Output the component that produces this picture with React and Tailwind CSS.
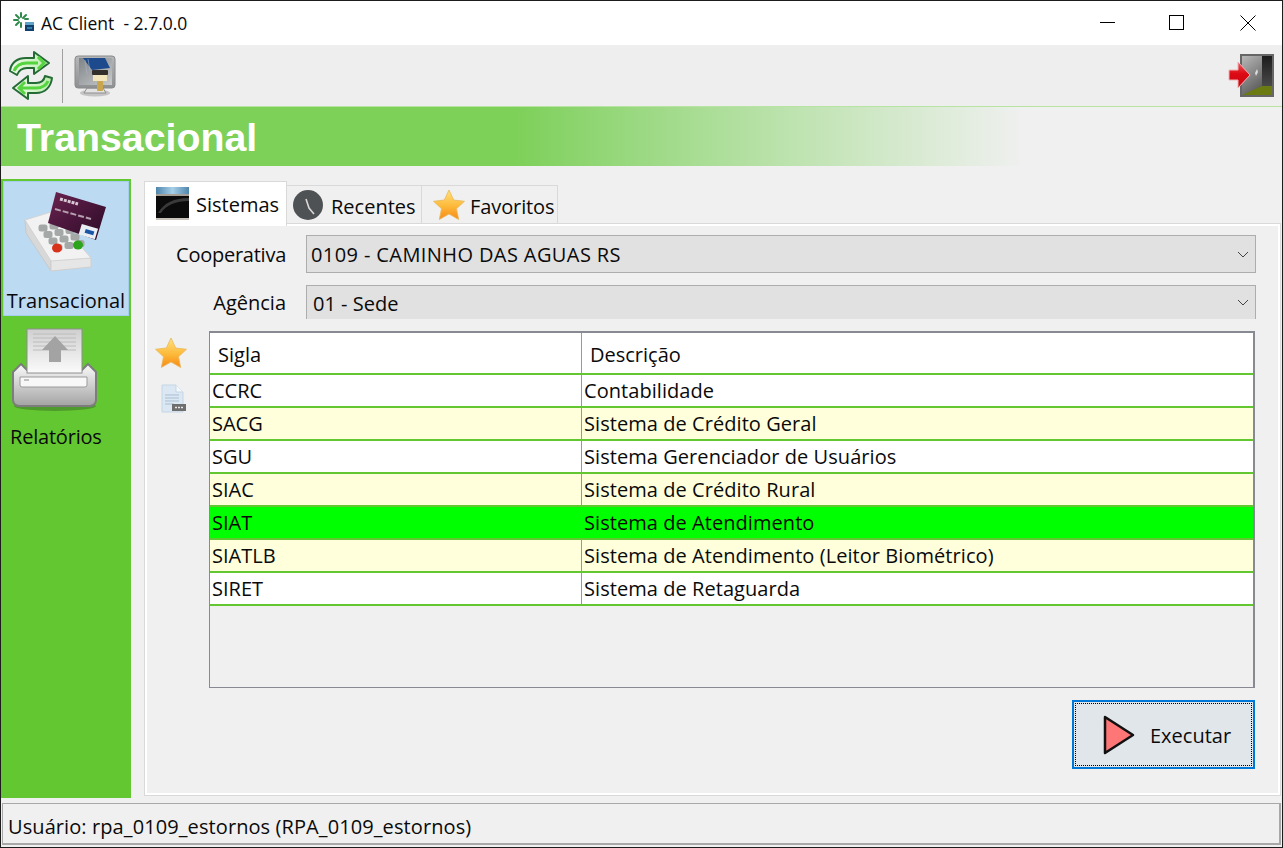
import React from 'react';

const UI_FONT = 'font-["Open_Sans","Noto_Sans",sans-serif]';

const rows = [
    { sigla: 'CCRC', desc: 'Contabilidade', bg: 'bg-white' },
    { sigla: 'SACG', desc: 'Sistema de Crédito Geral', bg: 'bg-[#ffffdc]' },
    { sigla: 'SGU', desc: 'Sistema Gerenciador de Usuários', bg: 'bg-white' },
    { sigla: 'SIAC', desc: 'Sistema de Crédito Rural', bg: 'bg-[#ffffdc]' },
    { sigla: 'SIAT', desc: 'Sistema de Atendimento', bg: 'bg-[#00ff00]' },
    { sigla: 'SIATLB', desc: 'Sistema de Atendimento (Leitor Biométrico)', bg: 'bg-[#ffffdc]' },
    { sigla: 'SIRET', desc: 'Sistema de Retaguarda', bg: 'bg-white' },
];

const AppLogo = () => (
    <svg width="22" height="22" viewBox="0 0 22 22">
        <g stroke="#2f8a4c" strokeWidth="2" strokeLinecap="round">
            <path d="M8 1v4M3 3l3 3M1 8h4M3 13l3-3M8 15v-4M13 3l-3 3M15 7h-3" />
        </g>
        <rect x="12" y="10" width="9" height="9" fill="#123f6b" />
        <rect x="12" y="10" width="9" height="3" fill="#5fa3c7" />
        <rect x="14" y="15" width="5" height="2" fill="#2f7fa8" />
    </svg>
);

const RefreshIcon = () => (
    <svg width="46" height="50" viewBox="0 0 46 50">
        <defs>
            <linearGradient id="arrowFill" x1="0" y1="0" x2="1" y2="0">
                <stop offset="0" stopColor="#eef8ea" />
                <stop offset="1" stopColor="#b9efab" />
            </linearGradient>
        </defs>
        <path d="M2 20C3 11 10 7 18 7h8V1l15 11-15 11v-6h-7c-5 0-8 2-10 7l-7-4z" fill="url(#arrowFill)" stroke="#246b36" strokeWidth="2" strokeLinejoin="round" />
        <path d="M44 27c-1 9-7 15-16 15h-8v6L5 37l15-12v7h8c5 0 8-2 9-7l7 2z" fill="url(#arrowFill)" stroke="#246b36" strokeWidth="2" strokeLinejoin="round" />
        <path d="M6 20c2-5 7-8 13-8h11M30 6l6 6-6 6" fill="none" stroke="#55d43f" strokeWidth="3" />
        <path d="M40 30c-2 5-6 7-12 7H13M17 31l-6 6 6 6" fill="none" stroke="#55d43f" strokeWidth="3" />
    </svg>
);

const MonitorIcon = () => (
    <svg width="44" height="44" viewBox="0 0 44 44">
        <defs>
            <linearGradient id="screenFill" x1="0" y1="0" x2="1" y2="1">
                <stop offset="0" stopColor="#7f8487" />
                <stop offset="1" stopColor="#c9cbcc" />
            </linearGradient>
            <linearGradient id="bezelFill" x1="0" y1="0" x2="0" y2="1">
                <stop offset="0" stopColor="#b5b7b8" />
                <stop offset="1" stopColor="#8e9092" />
            </linearGradient>
        </defs>
        <ellipse cx="22" cy="39" rx="15" ry="3.500" fill="#c4c4c4" />
        <path d="M14 34h16l3 5H11z" fill="#e2e2e2" stroke="#8f8f8f" />
        <rect x="2" y="2" width="40" height="32" rx="3" fill="url(#bezelFill)" stroke="#8a8a8a" />
        <rect x="6" y="4" width="33" height="27" fill="url(#screenFill)" />
        <path d="M10 4h22l5 10-18 2z" fill="#1c4a8c" />
        <path d="M12 6l2 14M15 5l2 12" stroke="#a9b6c9" strokeWidth="0.800" opacity="0.700" />
        <rect x="19" y="16" width="16" height="5" rx="1" fill="#33302b" />
        <rect x="20" y="21" width="14" height="6" fill="#f3e6bd" />
        <rect x="24" y="27" width="6" height="10" rx="1" fill="#c9a64e" />
    </svg>
);

const ExitIcon = () => (
    <svg width="48" height="46" viewBox="0 0 48 46">
        <defs>
            <linearGradient id="doorFill" x1="0" y1="0" x2="0.600" y2="1">
                <stop offset="0" stopColor="#b8b8b8" />
                <stop offset="1" stopColor="#525252" />
            </linearGradient>
            <linearGradient id="darkFill" x1="0" y1="0" x2="0" y2="1">
                <stop offset="0" stopColor="#1c1c1c" />
                <stop offset="1" stopColor="#4a4a4a" />
            </linearGradient>
            <linearGradient id="redFill" x1="0" y1="0" x2="0" y2="1">
                <stop offset="0" stopColor="#ee5b60" />
                <stop offset="0.450" stopColor="#dc0a14" />
                <stop offset="1" stopColor="#c90812" />
            </linearGradient>
        </defs>
        <rect x="13" y="1" width="34" height="43" fill="#666666" />
        <rect x="15" y="3" width="30" height="39" fill="url(#doorFill)" />
        <rect x="35" y="3" width="10" height="31" fill="url(#darkFill)" />
        <path d="M15 42l20-9h10v9z" fill="#6c7a12" />
        <path d="M30 16l-2 4 1 3 2-4z" fill="#dcdcdc" />
        <path d="M2 17h9v-8l12 13-12 13v-8H2z" fill="url(#redFill)" stroke="#efb4b4" />
    </svg>
);

const TerminalIcon = () => (
    <svg width="33" height="33" viewBox="0 0 33 33">
        <defs>
            <linearGradient id="termBar" x1="0" y1="0" x2="1" y2="0">
                <stop offset="0" stopColor="#4f86ac" />
                <stop offset="0.500" stopColor="#a6cfe8" />
                <stop offset="1" stopColor="#4f86ac" />
            </linearGradient>
        </defs>
        <rect width="33" height="9" fill="url(#termBar)" />
        <rect y="7" width="33" height="2" fill="#a59f96" />
        <rect y="9" width="33" height="22" fill="#0b0b0b" />
        <path d="M2 26C8 16 18 11 33 11v3C20 14 10 18 5 26z" fill="#3a3a3a" />
        <rect y="31" width="33" height="2" fill="#c9c4bb" />
    </svg>
);

const ClockIcon = () => (
    <svg width="30" height="30" viewBox="0 0 30 30">
        <circle cx="15" cy="15" r="15" fill="#4f5254" />
        <path d="M13 9l3 9 5 6" fill="none" stroke="#d8d8d8" strokeWidth="1.600" />
    </svg>
);

const StarIcon = ({ size = 32, id }) => (
    <svg width={size} height={size} viewBox="0 0 32 32">
        <defs>
            <linearGradient id={id} x1="0" y1="0" x2="0" y2="1">
                <stop offset="0" stopColor="#ffe27c" />
                <stop offset="0.550" stopColor="#fdb93a" />
                <stop offset="1" stopColor="#f78a14" />
            </linearGradient>
        </defs>
        <path d="M16 1l4.700 10 10.800 1.300-8 7.400 2.200 10.800L16 25l-9.700 5.500 2.200-10.800-8-7.400L11.300 11z" fill={`url(#${id})`} stroke="#e8b85c" strokeWidth="0.800" strokeLinejoin="round" />
    </svg>
);

const DocIcon = () => (
    <svg width="26" height="30" viewBox="0 0 26 30">
        <path d="M1 1h14l7 7v20H1z" fill="#dbe8f4" stroke="#c5d5e4" />
        <path d="M15 1v7h7" fill="#f4f8fc" stroke="#c5d5e4" />
        <path d="M4 11h14M4 14h14M4 17h14M4 20h9" stroke="#a9bdd0" />
        <rect x="11" y="20" width="14" height="7" fill="#6e6e6e" />
        <path d="M14 23.500h2M17 23.500h2M20 23.500h2" stroke="#e8e8e8" strokeWidth="1.500" />
    </svg>
);

// key positions on the keypad, 3 across by 4 deep
const keypadKeys = [0, 1, 2].flatMap((i) =>
    [0, 1, 2, 3].map((j) => ({ x: 19 + i * 11 + j * 5, y: 38 - i * 2 + j * 6.5 }))
);

const CardTerminalIcon = () => (
    <svg width="84" height="84" viewBox="0 0 84 84">
        <defs>
            <linearGradient id="cardFill" x1="0" y1="0" x2="1" y2="1">
                <stop offset="0" stopColor="#6a2350" />
                <stop offset="1" stopColor="#2a0a26" />
            </linearGradient>
        </defs>
        <path d="M1 30l26 40v11L2 43z" fill="#d8d8d8" stroke="#c8c8c8" />
        <path d="M27 70l40-2v9l-40 4z" fill="#e6e6e6" stroke="#cfcfcf" />
        <path d="M1 30l26-8 40 46-40 3z" fill="#f2f2f2" stroke="#d4d4d4" />
        <g fill="#a4a8a6">
            {keypadKeys.map((k) => (
                <rect key={`${k.x}-${k.y}`} x={k.x - 4.500} y={k.y - 3.500} width="9" height="7" rx="2.500" />
            ))}
        </g>
        <path d="M32 2l50 15-10 33-48-17z" fill="url(#cardFill)" />
        <path d="M36 9l18 5" stroke="#d9c8d5" strokeWidth="3" strokeDasharray="3 1" />
        <path d="M31 19l36 10" stroke="#b79fb2" strokeWidth="2" strokeDasharray="6 2" />
        <rect x="56" y="36" width="17" height="11" fill="#e9eef2" transform="rotate(17 64 41)" />
        <rect x="61" y="40" width="9" height="4" fill="#1a55a8" transform="rotate(17 65 42)" />
        <ellipse cx="33" cy="58" rx="5" ry="4.500" fill="#d8321a" />
        <ellipse cx="54" cy="55" rx="5" ry="4.500" fill="#2ca51c" />
    </svg>
);

const PrinterIcon = () => (
    <svg width="88" height="84" viewBox="0 0 88 84">
        <defs>
            <linearGradient id="paperFill" x1="0" y1="0" x2="0" y2="1">
                <stop offset="0" stopColor="#cfcfcf" />
                <stop offset="1" stopColor="#fbfbfb" />
            </linearGradient>
            <linearGradient id="bodyFill" x1="0" y1="0" x2="0" y2="1">
                <stop offset="0" stopColor="#fbfbfb" />
                <stop offset="1" stopColor="#a3a3a3" />
            </linearGradient>
        </defs>
        <ellipse cx="44" cy="78" rx="41" ry="5" fill="#4f9a2c" />
        <path d="M10 36L16 42h55l6-6 8 8v28a6 6 0 0 1-6 6H8a6 6 0 0 1-6-6V44z" fill="url(#bodyFill)" stroke="#7d7d7d" strokeWidth="2" />
        <rect x="16" y="1" width="55" height="44" fill="url(#paperFill)" stroke="#8e8e8e" />
        <path d="M22 6h43M22 10h43M22 14h43M22 18h43M22 22h43" stroke="#bcbcbc" />
        <path d="M44 8l13 14h-7v12H38V22h-7z" fill="#a3a3a3" />
        <path d="M9 49h67v8a2 2 0 0 1-2 2H11a2 2 0 0 1-2-2z" fill="#f8f8f8" stroke="#9a9a9a" />
        <path d="M13 52h5" stroke="#8a8a8a" />
    </svg>
);

const PlayIcon = () => (
    <svg width="32" height="40" viewBox="0 0 32 40">
        <path d="M2 2l28 18L2 38z" fill="#ff7676" stroke="#111" strokeWidth="2.500" strokeLinejoin="round" />
    </svg>
);

const ComboBox = ({ children, className }) => (
    <div className={`flex items-center justify-between bg-[#e1e1e1] border border-[#adadad] ${className}`}>
        <span className="mt-[2px]">{children}</span>
        <svg width="12" height="7" viewBox="0 0 12 7" className="mr-[6px]">
            <path d="M1 1l5 5 5-5" fill="none" stroke="#444" />
        </svg>
    </div>
);

export default function App() {
    return (
        <div className={`w-[1283px] h-[848px] flex flex-col overflow-hidden bg-[#f0f0f0] border border-[#1c1c1c] text-[#0a0a0a] ${UI_FONT}`}>
            {/* title bar */}
            <div className="h-[44px] shrink-0 bg-white flex items-center">
                <div className="ml-[12px] mr-[6px]"><AppLogo /></div>
                <span className="text-[17.500px] whitespace-pre">AC Client  - 2.7.0.0</span>
                <div className="ml-auto flex items-center">
                    <svg width="16" height="16" viewBox="0 0 16 16" className="mr-[53px]"><path d="M0 7.500h15" stroke="#000" /></svg>
                    <svg width="16" height="16" viewBox="0 0 16 16" className="mr-[55px]"><rect x="0.500" y="0.500" width="14" height="14" fill="none" stroke="#000" /></svg>
                    <svg width="16" height="16" viewBox="0 0 16 16" className="mr-[26px]"><path d="M0.500 0.500l15 15M15.500 0.500l-15 15" stroke="#000" /></svg>
                </div>
            </div>

            {/* toolbar */}
            <div className="h-[61px] shrink-0 bg-[#eeeeee] flex items-center pl-[7px] pr-[7px]">
                <RefreshIcon />
                <div className="w-px h-[54px] bg-[#a0a0a0] ml-[8px] mr-[10px]" />
                <MonitorIcon />
                <div className="ml-auto"><ExitIcon /></div>
            </div>

            {/* section header */}
            <div className="h-[60px] shrink-0 border-t border-[#b7e3a3] bg-gradient-to-r from-[#7dd058] from-[40%] to-[#f0f0f0] to-[80%] flex items-center pl-[16px]">
                <span className="text-[39.300px] font-bold text-white font-['Liberation_Sans',sans-serif] mt-[2px]">Transacional</span>
            </div>

            <div className="flex-1 flex pt-[13px] min-h-0">
                {/* sidebar */}
                <div className="w-[130px] h-[619px] shrink-0 bg-[#63c732]">
                    <div className="h-[139px] border-2 border-[#63c732] bg-[#bcdaf2] outline outline-1 outline-offset-[-3px] outline-[#a5cdec] flex flex-col items-center pt-[9px]">
                        <CardTerminalIcon />
                        <span className="text-[20px] mt-[13px] leading-[27px]">Transacional</span>
                    </div>
                    <div className="flex flex-col items-start pl-[9px] pt-[10px]">
                        <div className="ml-[1px]"><PrinterIcon /></div>
                        <span className="text-[20px] tracking-[-0.200px] mt-[10px]">Relatórios</span>
                    </div>
                </div>

                {/* main area */}
                <div className="flex-1 min-w-0 pl-[14px] pr-[2px] flex flex-col">
                    <div className="flex items-end h-[45px] shrink-0 ml-[-1px]">
                        <div className="flex items-center w-[143px] h-[45px] pl-[11px] gap-[7px] bg-white border border-b-0 border-[#d9d9d9] relative z-10 mb-[-2px]">
                            <div className="mt-[-2px]"><TerminalIcon /></div>
                            <span className="text-[20px] mt-[1px]">Sistemas</span>
                        </div>
                        <div className="flex items-center w-[135px] h-[39px] pl-[6px] gap-[8px] bg-[#f0f0f0] border border-l-0 border-[#d9d9d9]">
                            <ClockIcon />
                            <span className="text-[20px] mt-[5px]">Recentes</span>
                        </div>
                        <div className="flex items-center w-[136px] h-[39px] pl-[11px] gap-[5px] bg-[#f0f0f0] border border-l-0 border-[#d9d9d9]">
                            <StarIcon id="tabStar" size={32} />
                            <span className="text-[20px] mt-[5px] tracking-[-0.100px]">Favoritos</span>
                        </div>
                    </div>
                    <div className="h-[571px] bg-[#f0f0f0] border-2 border-white outline outline-1 outline-[#d9d9d9] flex flex-col">
                        <div className="flex items-center h-[38px] mt-[9px] shrink-0">
                            <span className="text-[20px] w-[139px] text-right tracking-[-0.250px] mt-[2px]">Cooperativa</span>
                            <ComboBox className="ml-[20px] w-[950px] h-[38px] pl-[4px] text-[20px] tracking-[0.400px]">0109 - CAMINHO DAS AGUAS RS</ComboBox>
                        </div>
                        <div className="flex items-center h-[34px] mt-[12px] shrink-0">
                            <span className="text-[20px] w-[139px] text-right mt-[2px]">Agência</span>
                            <ComboBox className="ml-[20px] w-[950px] h-[34px] pl-[6px] text-[20px] border-b-0">01 - Sede</ComboBox>
                        </div>
                        <div className="flex mt-[12px]">
                            <div className="w-[62px] shrink-0 flex flex-col items-end pr-[22px] pt-[6px] gap-[15px]">
                                <StarIcon id="sideStar" size={32} />
                                <DocIcon />
                            </div>
                            <div className="w-[1046px] h-[357px] bg-[#f0f0f0] border-2 border-[#878a91] border-l border-b">
                                <div className="flex h-[42px] bg-white border-b-2 border-[#63c732]">
                                    <div className="w-[371px] pl-[8px] text-[20px] leading-[44px]">Sigla</div>
                                    <div className="flex-1 border-l border-[#63c732] pl-[8px] text-[20px] leading-[44px]">Descrição</div>
                                </div>
                                {rows.map((row) => (
                                    <div key={row.sigla} className={`flex h-[33px] border-b-2 border-[#63c732] ${row.bg}`}>
                                        <div className="w-[371px] pl-[2px] text-[20px] leading-[32px]">{row.sigla}</div>
                                        <div className="flex-1 border-l border-[#63c732] pl-[2px] text-[20px] leading-[32px] tracking-[0.060px]">{row.desc}</div>
                                    </div>
                                ))}
                            </div>
                        </div>
                        <div className="flex justify-end mt-[12px] pr-[23px]">
                            <div className="w-[183px] h-[69px] bg-[#e1e6ea] border-2 border-[#0078d7] p-[1px]">
                                <div className="w-full h-full border border-dotted border-black flex items-center pl-[27px]">
                                    <PlayIcon />
                                    <span className="text-[20px] ml-[15px] mt-[3px]">Executar</span>
                                </div>
                            </div>
                        </div>
                    </div>
                </div>
            </div>

            {/* status bar */}
            <div className="h-[42px] shrink-0 mx-[1px] mb-[2px] bg-[#f0f0f0] border border-[#a8a8a8] border-b-2 border-r-2 flex items-center pl-[5px]">
                <span className="text-[20px] mt-[6px] tracking-[0.090px]">Usuário: rpa_0109_estornos (RPA_0109_estornos)</span>
            </div>
        </div>
    );
}
